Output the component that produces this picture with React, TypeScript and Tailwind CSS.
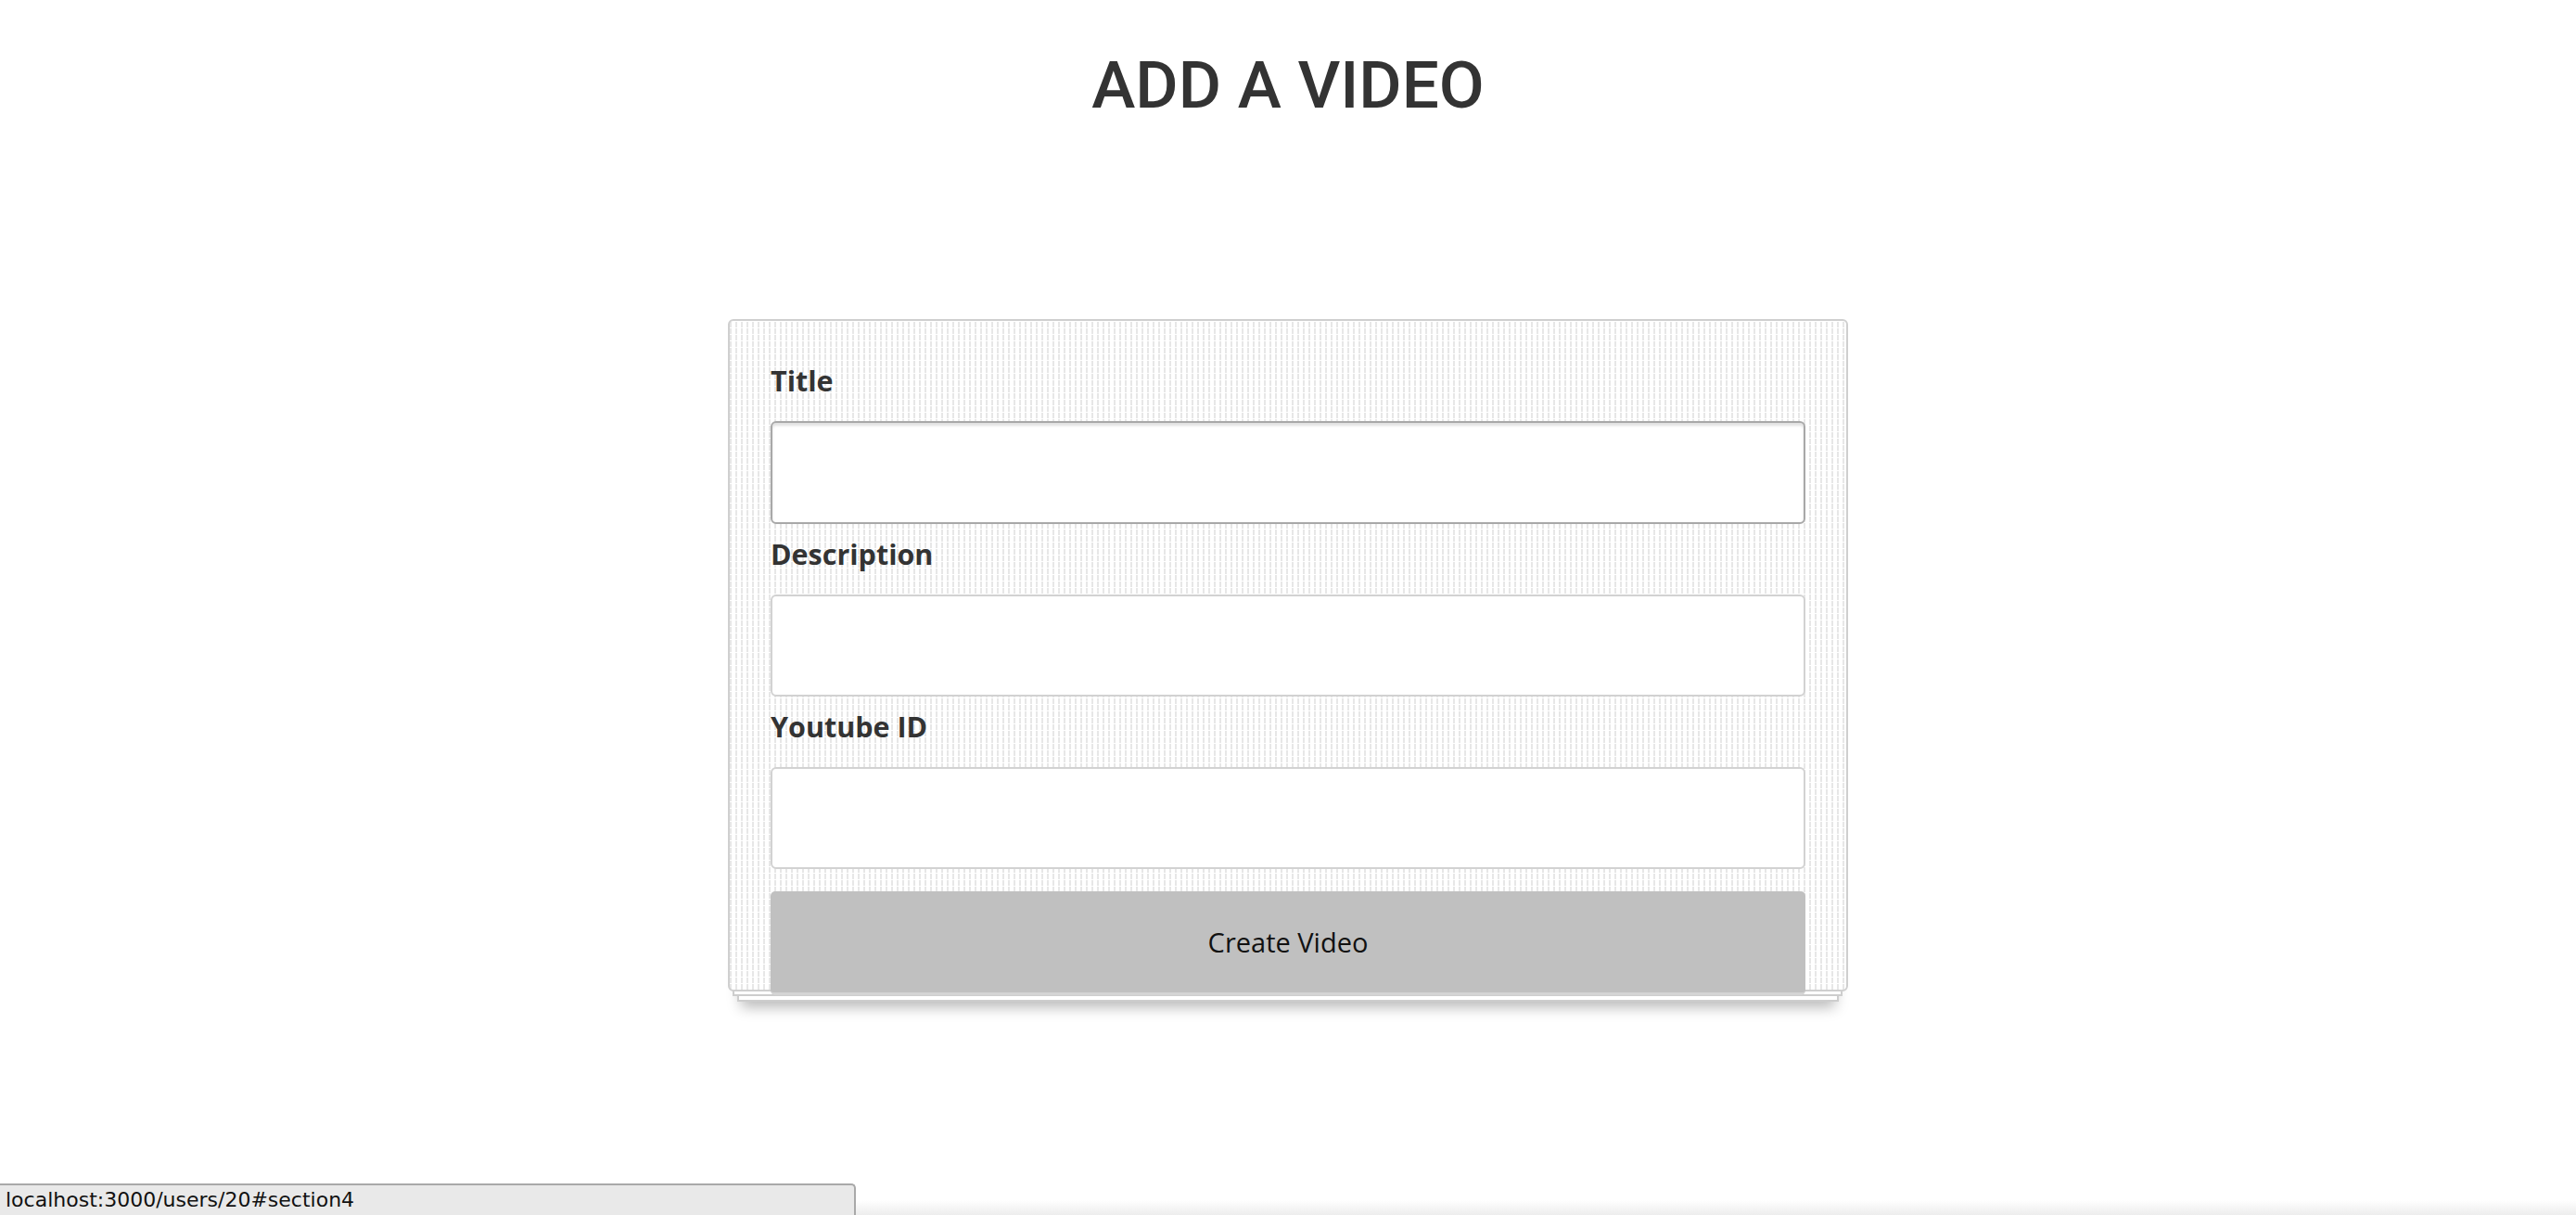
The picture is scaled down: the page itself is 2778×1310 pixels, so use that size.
import React from "react";

function Field({ label, focused }: { label: string; focused?: boolean }) {
  return (
    <div className="flex flex-col">
      <label className="font-['Open_Sans',sans-serif] font-bold text-[30.5px] leading-[36px] text-[#333]">
        {label}
      </label>
      <input
        type="text"
        className={
          focused
            ? "mt-[26px] h-[111px] w-full rounded-[6px] border-2 border-[#a8a8a8] bg-white shadow-[inset_0_3px_3px_rgba(0,0,0,0.12)] outline-none"
            : "mt-[26px] h-[110px] w-full rounded-[6px] border-2 border-[#d2d2d2] bg-white outline-none"
        }
      />
    </div>
  );
}

export default function App() {
  return (
    <div className="relative min-h-[1310px] w-full overflow-hidden bg-white">
      <h1 className="mt-[56px] text-center font-['Roboto',sans-serif] font-medium text-[71px] leading-[71px] text-[#333]">
        ADD A VIDEO
      </h1>

      <div className="relative mx-auto mt-[217px] w-[1208px]">
        <div className="absolute left-[10px] right-[10px] bottom-[-11px] h-[60px] border-2 border-[#cdcdcd] bg-white shadow-[0_10px_14px_-4px_rgba(0,0,0,0.28)]" />
        <div className="absolute left-[5px] right-[6px] bottom-[-5px] h-[60px] border-2 border-[#cdcdcd] bg-white" />
        <div className="relative z-10 rounded-[6px] border-2 border-[#cfcfcf] bg-white bg-[image:linear-gradient(to_bottom,#ffffff_1px,transparent_1px),linear-gradient(to_right,#e7e7e7_2px,transparent_2px)] bg-[size:6px_7px] px-[44px] pt-[46px]">
          <div className="flex flex-col gap-[14px]">
            <Field label="Title" focused />
            <Field label="Description" />
            <Field label="Youtube ID" />
          </div>
          <button
            type="button"
            className="relative z-10 mt-[24px] mb-[-6px] flex h-[112px] w-full items-center justify-center rounded-[5px] border-b-[3px] border-[#d4d4d4] bg-[#c0c0c0] font-['Open_Sans',sans-serif] text-[29px] text-[#111]"
          >
            Create Video
          </button>
        </div>
      </div>

      <div className="absolute bottom-0 right-0 left-[923px] h-[16px] bg-gradient-to-b from-transparent to-[#ededed]" />

      <div className="absolute bottom-0 left-0 h-[34px] w-[923px] rounded-tr-[5px] border-t-2 border-r-2 border-[#a9a9a9] bg-[#e9e9e9] pl-[6px] pt-[2px] font-['DejaVu_Sans',sans-serif] text-[22px] leading-[28px] text-[#111]">
        localhost:3000/users/20#section4
      </div>
    </div>
  );
}
